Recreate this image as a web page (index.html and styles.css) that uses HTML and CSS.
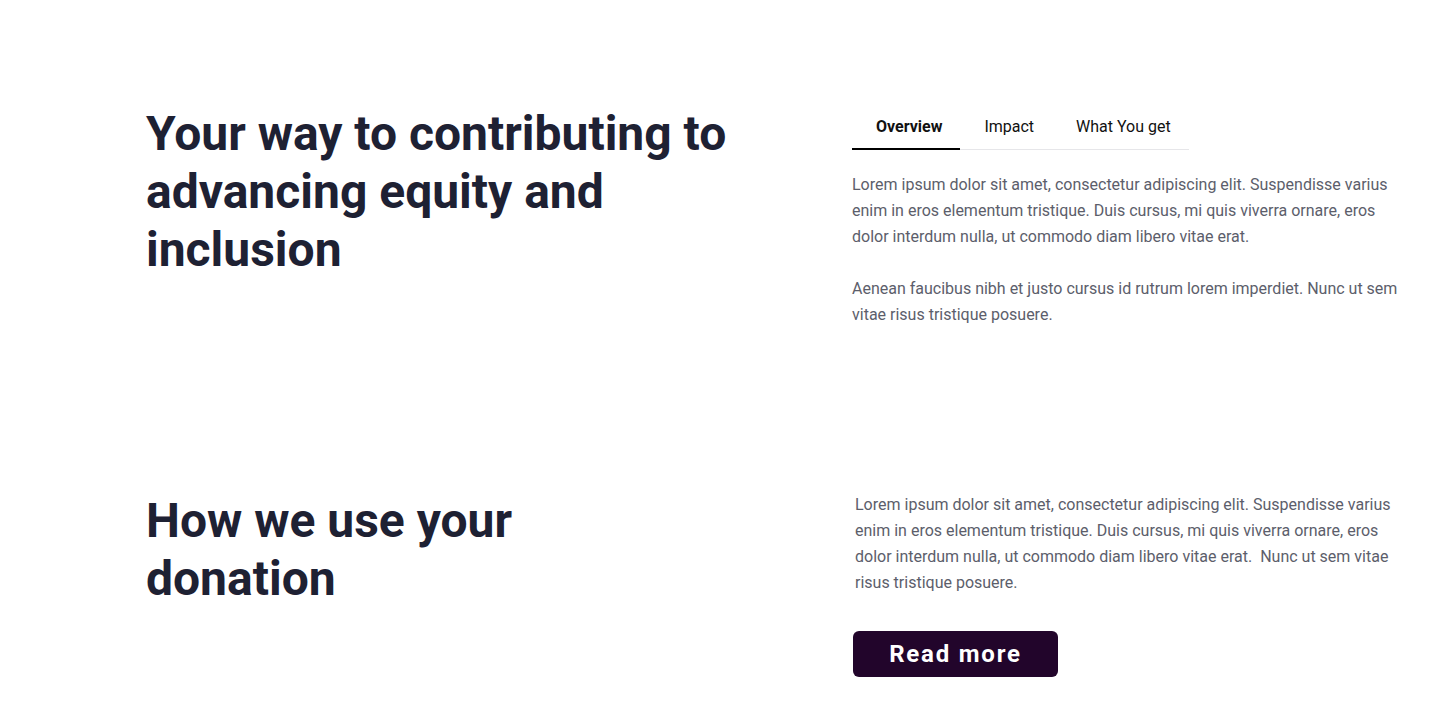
FILE: index.html
```html
<!DOCTYPE html>
<html lang="en">
<head>
<meta charset="utf-8">
<title>Donation</title>
<link rel="stylesheet" href="styles.css">
</head>
<body>
<main class="page">
  <section class="row row-first">
    <h2 class="title title-wide">Your way to contributing to advancing equity and inclusion</h2>
    <div class="col">
      <div class="tabs">
        <button class="tab active">Overview</button>
        <button class="tab">Impact</button>
        <button class="tab">What You get</button>
      </div>
      <div class="tab-body">
        <p class="text">Lorem ipsum dolor sit amet, consectetur adipiscing elit. Suspendisse varius enim in eros elementum tristique. Duis cursus, mi quis viverra ornare, eros dolor interdum nulla, ut commodo diam libero vitae erat.</p>
        <p class="text">Aenean faucibus nibh et justo cursus id rutrum lorem imperdiet. Nunc ut sem vitae risus tristique posuere.</p>
      </div>
    </div>
  </section>
  <section class="row row-second">
    <h2 class="title title-narrow">How we use your donation</h2>
    <div class="col">
      <p class="text text-narrow">Lorem ipsum dolor sit amet, consectetur adipiscing elit. Suspendisse varius enim in eros elementum tristique. Duis cursus, mi quis viverra ornare, eros dolor interdum nulla, ut commodo diam libero vitae erat.&nbsp; Nunc ut sem vitae risus tristique posuere.</p>
      <a class="btn" href="#">Read more</a>
    </div>
  </section>
</main>
</body>
</html>
```

FILE: styles.css
```css
* { box-sizing: border-box; }
html, body { margin: 0; padding: 0; background: #ffffff; }
body { font-family: Roboto, "Noto Sans", Arial, sans-serif; }

.page {
  padding-left: 146px;
  padding-right: 30px;
}

.row {
  display: grid;
  grid-template-columns: 706px 1fr;
  align-items: start;
}
.row-first { padding-top: 105px; }
.row-second { padding-top: 138px; }

.title {
  margin: 0;
  font-size: 48px;
  line-height: 58px;
  font-weight: 700;
  color: #1e2133;
  letter-spacing: 0;
}
.title-wide { max-width: 600px; }
.title-narrow { max-width: 480px; }

.col { min-width: 0; }

.tabs {
  display: flex;
  width: 337px;
  border-bottom: 1px solid #e6e6e9;
  margin-top: 3px;
}
.tab {
  font-family: inherit;
  font-size: 16px;
  line-height: 20px;
  padding: 9px 18px 11px 24px;
  white-space: nowrap;
  background: none;
  border: 0;
  border-bottom: 2px solid transparent;
  margin-bottom: -1px;
  color: #111111;
  cursor: pointer;
}
.tab.active {
  font-weight: 700;
  border-bottom-color: #000000;
}

.tab-body { padding-top: 22px; }

.text {
  margin: 0 0 26px;
  font-size: 16px;
  line-height: 26px;
  color: #5c5e6b;
  max-width: 552px;
}
.text-narrow {
  max-width: 548px;
  padding-left: 3px;
  margin-bottom: 35px;
}

.btn {
  display: inline-block;
  width: 205px;
  height: 46px;
  margin-left: 1px;
  line-height: 46px;
  text-align: center;
  background: #22052b;
  color: #ffffff;
  font-size: 24px;
  font-weight: 700;
  letter-spacing: 1.8px;
  border-radius: 6px;
  text-decoration: none;
}
```
